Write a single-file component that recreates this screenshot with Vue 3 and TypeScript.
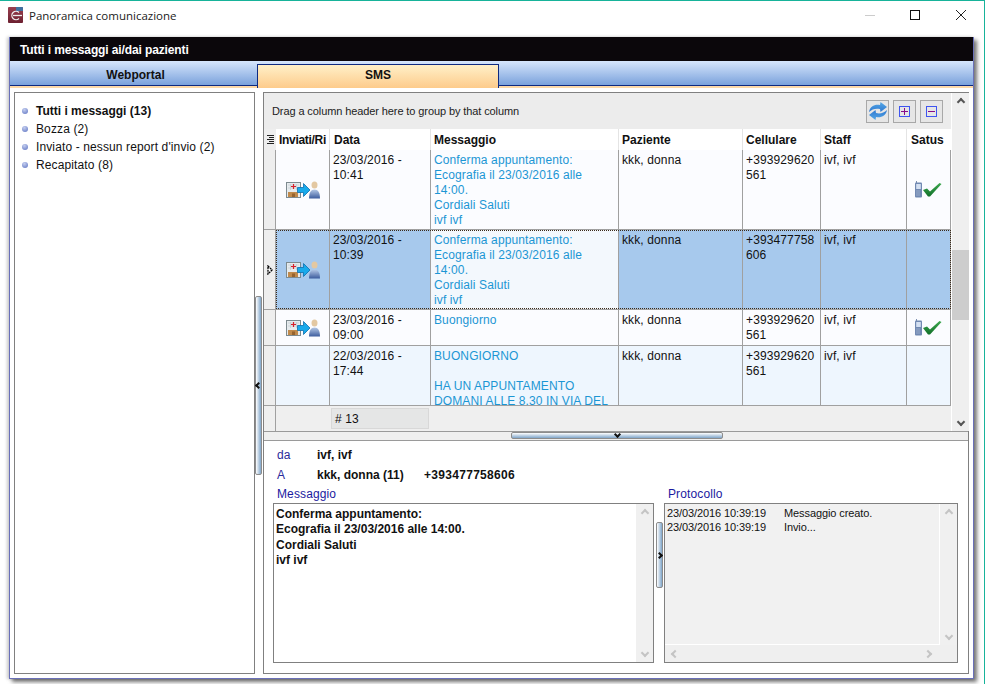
<script setup lang="ts">
interface Row {
  date: string
  time: string
  message: string[]
  phone: string[]
  sent: boolean
  delivered: boolean
  selected?: boolean
  alt?: boolean
  height: number
}

const folders = [
  { label: 'Tutti i messaggi (13)', bold: true },
  { label: 'Bozza (2)', bold: false },
  { label: "Inviato - nessun report d'invio (2)", bold: false },
  { label: 'Recapitato (8)', bold: false },
]

const columns = ['Inviati/Ri', 'Data', 'Messaggio', 'Paziente', 'Cellulare', 'Staff', 'Satus']

const confirm = ['Conferma appuntamento:', 'Ecografia il 23/03/2016 alle', '14:00.', 'Cordiali Saluti', 'ivf ivf']

const rows: Row[] = [
  { date: '23/03/2016 -', time: '10:41', message: confirm, phone: ['+393929620', '561'], sent: true, delivered: true, height: 79 },
  { date: '23/03/2016 -', time: '10:39', message: confirm, phone: ['+393477758', '606'], sent: true, delivered: false, selected: true, height: 79 },
  { date: '23/03/2016 -', time: '09:00', message: ['Buongiorno'], phone: ['+393929620', '561'], sent: true, delivered: true, height: 35 },
  { date: '22/03/2016 -', time: '17:44', message: ['BUONGIORNO', '\u00a0', 'HA UN APPUNTAMENTO', 'DOMANI ALLE 8.30 IN VIA DEL'], phone: ['+393929620', '561'], sent: false, delivered: false, alt: true, height: 59 },
]
</script>

<template>
  <div class="window">
    <div class="titlebar">
      <svg class="app-icon" width="15" height="16" viewBox="0 0 15 16">
        <defs>
          <linearGradient id="appbg" x1="0" y1="0" x2="0" y2="1">
            <stop offset="0" stop-color="#9a4050" />
            <stop offset="1" stop-color="#6c2030" />
          </linearGradient>
        </defs>
        <rect width="15" height="16" rx="1" fill="url(#appbg)" />
        <path d="M8 0h6a1 1 0 0 1 1 1v3H8z" fill="#3f6f9f" />
        <path d="M11 5.500A4.200 4.200 0 1 0 11 11.500" fill="none" stroke="#eee" stroke-width="1.300" />
        <path d="M5 8.500h9" stroke="#eee" stroke-width="1.300" />
      </svg>
      <span class="title">Panoramica comunicazione</span>
      <span class="spacer"></span>
      <span class="win-min"></span>
      <span class="win-max"></span>
      <svg class="win-close" width="10" height="10" viewBox="0 0 10 10">
        <path d="M0 0l10 10M10 0L0 10" stroke="#222" stroke-width="1" fill="none" />
      </svg>
    </div>

    <div class="frame">
      <div class="frame-head">Tutti i messaggi ai/dai pazienti</div>
      <div class="tabs">
        <div class="tab">Webportal</div>
        <div class="tab active">SMS</div>
      </div>

      <div class="main">
        <ul class="folders">
          <li v-for="f in folders" :key="f.label" :class="{ bold: f.bold }">
            <span class="dot"></span>{{ f.label }}
          </li>
        </ul>

        <div class="vsplit">
          <div class="vgrip"><span class="chev-l"></span></div>
        </div>

        <div class="right">
          <div class="upper">
            <div class="grid">
              <div class="groupbar">
                <span>Drag a column header here to group by that column</span>
                <div class="tools">
                  <button class="tool">
                    <svg width="20" height="20" viewBox="0 0 20 20">
                      <defs>
                        <linearGradient id="refresh" x1="0" y1="0" x2="0" y2="1">
                          <stop offset="0" stop-color="#55a8e6" />
                          <stop offset="1" stop-color="#2f78d0" />
                        </linearGradient>
                      </defs>
                      <path d="M1 11C2 5 7 3 12 4l.5-3L19 6l-6.500 5-.5-3C8 7 4 8 1 11z" fill="url(#refresh)" />
                      <path d="M1 11C2 5 7 3 12 4l.5-3L19 6l-6.500 5-.5-3C8 7 4 8 1 11z" fill="url(#refresh)" transform="rotate(180 10 10)" />
                    </svg>
                  </button>
                  <button class="tool"><span class="mini plus"></span></button>
                  <button class="tool"><span class="mini"></span></button>
                </div>
              </div>

              <div class="cols headrow">
                <div class="ind">
                  <svg width="7" height="9" viewBox="0 0 7 9"><path d="M0 .5h7M2 2.500h5M0 4.500h7M2 6.500h5M0 8.500h7" stroke="#222" stroke-width="1" /></svg>
                </div>
                <div v-for="c in columns" :key="c" class="hcell">{{ c }}</div>
              </div>

              <div class="body">
                <div
                  v-for="(r, i) in rows"
                  :key="i"
                  class="cols row"
                  :class="{ selected: r.selected, alt: r.alt }"
                  :style="{ height: r.height + 'px' }"
                >
                  <div class="ind">
                    <svg v-if="r.selected" width="6" height="10" viewBox="0 0 6 10">
                      <path d="M1 1l4 4-4 4z" fill="#fff" stroke="#000" stroke-width="1.300" stroke-dasharray="2 .7" />
                    </svg>
                  </div>
                  <div class="cell center">
                    <svg v-if="r.sent" width="34" height="18" viewBox="0 0 34 18">
                      <defs>
                        <linearGradient id="person" x1="0" y1="0" x2="0" y2="1">
                          <stop offset="0" stop-color="#b4c8e6" />
                          <stop offset="1" stop-color="#3c5c9e" />
                        </linearGradient>
                      </defs>
                      <rect x=".5" y="1.500" width="14" height="15" fill="#e6ebee" stroke="#7d8a8f" />
                      <path d="M2 4h11M2 7h11M4.500 3v6M10.500 3v6" stroke="#c0cad0" stroke-width=".7" />
                      <path d="M7.500 3v5M5 5.500h5" stroke="#d8202a" stroke-width="1.200" />
                      <rect x="2" y="11" width="10" height="5" fill="#c08a4c" />
                      <rect x="6" y="12.500" width="3" height="3.500" fill="#96632e" />
                      <path d="M11.500 6.500h6V2.500l6.500 6.500-6.500 6.500v-4h-6z" fill="#18a9ea" stroke="#0b6fae" stroke-width=".8" />
                      <ellipse cx="28.500" cy="4" rx="3" ry="3.500" fill="#e3c8a2" />
                      <path d="M23 17.500c0-6 2-9 5.500-9s5.500 3 5.500 9z" fill="url(#person)" />
                    </svg>
                  </div>
                  <div class="cell">{{ r.date }}<br />{{ r.time }}</div>
                  <div class="cell msg"><div v-for="(m, j) in r.message" :key="j">{{ m }}</div></div>
                  <div class="cell">kkk, donna</div>
                  <div class="cell">{{ r.phone[0] }}<br />{{ r.phone[1] }}</div>
                  <div class="cell">ivf, ivf</div>
                  <div class="cell center">
                    <svg v-if="r.delivered" class="status" width="27" height="17" viewBox="0 0 27 17">
                      <defs>
                        <linearGradient id="tick" x1="0" y1="0" x2="0" y2="1">
                          <stop offset="0" stop-color="#3ca84e" />
                          <stop offset="1" stop-color="#12702a" />
                        </linearGradient>
                      </defs>
                      <path d="M1.500 0v2" stroke="#7d8fb0" />
                      <rect x="0" y="1.500" width="7" height="15" rx="1" fill="#7189b2" />
                      <rect x="1.200" y="3" width="4.600" height="5" fill="#d4e0f2" />
                      <path d="M1.500 10h4M1.500 12h4M1.500 14h4" stroke="#c0cde2" stroke-dasharray="1 1" />
                      <path d="M8 9l4-1.500 3 3L24.500 2 26.500 3 15 15.500h-2z" fill="url(#tick)" />
                    </svg>
                  </div>
                </div>
              </div>

              <div class="cols footrow">
                <div class="ind"></div>
                <div class="fcell"></div>
                <div class="fcell"><span class="count"># 13</span></div>
              </div>
            </div>

            <div class="scroll">
              <span class="arrow up"></span>
              <span class="thumb"></span>
              <span class="arrow down"></span>
            </div>
          </div>

          <div class="hsplit"><div class="hgrip"><span class="chev-d"></span></div></div>

          <div class="detail">
            <div class="addr">
              <span class="addr-key">da</span><b>ivf, ivf</b>
            </div>
            <div class="addr">
              <span class="addr-key">A</span><b class="addr-name">kkk, donna (11)</b><b class="addr-phone">+393477758606</b>
            </div>
            <div class="panes">
              <div class="pane left-pane">
                <div class="pane-label">Messaggio</div>
                <div class="box white">
                  <div class="box-text bold-text">
                    Conferma appuntamento:<br />Ecografia il 23/03/2016 alle 14:00.<br />Cordiali Saluti<br />ivf ivf
                  </div>
                  <div class="box-scroll">
                    <span class="arrow up soft"></span>
                    <span class="arrow down soft"></span>
                  </div>
                </div>
              </div>

              <div class="psplit"><div class="pgrip"><span class="chev-r"></span></div></div>

              <div class="pane right-pane">
                <div class="pane-label">Protocollo</div>
                <div class="box grey">
                  <div class="proto-wrap">
                    <div class="proto">
                      <div class="proto-line"><span>23/03/2016 10:39:19</span><span>Messaggio creato.</span></div>
                      <div class="proto-line"><span>23/03/2016 10:39:19</span><span>Invio...</span></div>
                    </div>
                    <div class="box-scroll">
                      <span class="arrow up soft"></span>
                      <span class="arrow down soft"></span>
                    </div>
                  </div>
                  <div class="h-scroll">
                    <span class="arrow lft soft"></span>
                    <span class="arrow rgt soft"></span>
                  </div>
                </div>
              </div>
            </div>
          </div>
        </div>
      </div>
    </div>
  </div>
</template>

<style>
html, body { margin: 0; background: #fff; overflow: hidden; }
</style>

<style scoped>
.window {
  width: 985px;
  height: 684px;
  box-sizing: border-box;
  border-top: 1px solid #17b39a;
  border-right: 1px solid #17b39a;
  background: #fff;
  font-family: "Liberation Sans", Arial, sans-serif;
  font-size: 12px;
  letter-spacing: 0.12px;
  color: #111;
  overflow: hidden;
}
.titlebar {
  height: 36px;
  display: flex;
  align-items: center;
  padding: 0 18px 8px 8px;
  box-sizing: border-box;
}
.title { margin-left: 6px; font-family: "Open Sans", "Noto Sans", sans-serif; font-size: 11.5px; letter-spacing: 0; color: #222; }
.spacer { flex: 1; }
.win-min { width: 10px; height: 1px; background: #ccc; margin-right: 35px; }
.win-max { width: 8px; height: 8px; border: 1px solid #111; margin-right: 36px; }
.frame {
  margin-left: 9px;
  width: 965px;
  height: 642px;
  box-sizing: border-box;
  border: 1px solid #6a70b8;
  border-top: 0;
  background: #fff;
  box-shadow: 3px 3px 4px rgba(0, 0, 0, 0.55), -2px 0 3px rgba(0, 0, 0, 0.2);
  display: flex;
  flex-direction: column;
}
.frame-head {
  height: 24px;
  line-height: 27px;
  background: #0b070b;
  color: #fff;
  font-weight: bold;
  letter-spacing: -0.12px;
  padding-left: 10px;
  flex: none;
}
.tabs {
  height: 25px;
  display: flex;
  box-sizing: border-box;
  border-bottom: 1px solid #0e2a80;
  box-shadow: 0 2px 0 #fdd9a8;
  background: linear-gradient(#d6e6fc, #7ba2dc);
  flex: none;
}
.tab {
  width: 247px;
  text-align: center;
  font-weight: bold;
  letter-spacing: 0;
  line-height: 28px;
  padding-left: 4px;
  box-sizing: border-box;
  color: #111;
}
.tab.active {
  width: 242px;
  box-sizing: border-box;
  border: 1px solid #0e2a80;
  border-bottom: 0;
  margin-top: 3px;
  height: 24px;
  padding-left: 0;
  background: linear-gradient(#fff0c8, #fdcb8b);
  position: relative;
  line-height: 21px;
}
.main {
  flex: 1;
  min-height: 0;
  display: flex;
  padding: 6px 4px 4px 4px;
}
.folders {
  width: 241px;
  box-sizing: border-box;
  border: 1px solid #808080;
  list-style: none;
  margin: 0;
  padding: 9px 0 0 7px;
}
.folders li { height: 18px; line-height: 18px; display: flex; align-items: center; }
.folders li.bold { font-weight: bold; letter-spacing: 0; }
.dot {
  width: 6px;
  height: 6px;
  border-radius: 50%;
  background: radial-gradient(circle at 40% 30%, #c5cff0, #5a70c0);
  margin-right: 8px;
}
.vsplit { width: 8px; display: flex; align-items: center; }
.vgrip {
  width: 7px;
  height: 179px;
  margin-top: 4px;
  box-sizing: border-box;
  border: 1px solid #8c8c8c;
  border-radius: 2px;
  background: linear-gradient(90deg, #fff, #7fa5c9);
  display: flex;
  align-items: center;
  justify-content: center;
}
.right {
  width: 706px;
  box-sizing: border-box;
  border: 1px solid #808080;
  display: flex;
  flex-direction: column;
}
.upper { height: 338px; display: flex; border-bottom: 1px solid #9a9a9a; box-sizing: content-box; flex: none; }
.grid { width: 687px; display: flex; flex-direction: column; }
.groupbar {
  height: 36px;
  background: #ececec;
  display: flex;
  align-items: center;
  justify-content: space-between;
  padding: 0 8px 0 8px;
  font-size: 11px;
  letter-spacing: -0.1px;
  color: #222;
  flex: none;
}
.tools { display: flex; gap: 4px; }
.tool {
  width: 23px;
  height: 23px;
  padding: 0;
  box-sizing: border-box;
  border: 1px solid #a8a8a8;
  background: #e6e6e6;
  display: flex;
  align-items: center;
  justify-content: center;
}
.mini { width: 9px; height: 9px; border: 1px solid #3f55f0; position: relative; box-sizing: content-box; }
.mini::before { content: ""; position: absolute; left: 1px; right: 1px; top: 4px; height: 1px; background: #8a0a8a; }
.mini.plus::after { content: ""; position: absolute; top: 1px; bottom: 1px; left: 4px; width: 1px; background: #8a0a8a; }
.cols {
  display: grid;
  grid-template-columns: 12px 54px 101px 188px 124px 78px 86px 44px;
}
.headrow { height: 21px; background: #fff; flex: none; }
.headrow .ind { background: #eee; display: flex; align-items: center; justify-content: center; }
.hcell {
  font-weight: bold;
  letter-spacing: 0;
  line-height: 23px;
  padding-left: 3px;
  white-space: nowrap;
  overflow: hidden;
  border-right: 1px solid #e4e4e4;
}
.hcell:nth-child(2) { letter-spacing: -0.3px; }
.hcell:nth-child(3) { padding-left: 4px; }
.hcell:last-child { padding-left: 4px; border-right: 0; }
.body { flex: 1; min-height: 0; overflow: hidden; }
.row { box-sizing: content-box; border-bottom: 1px solid #a0a0a0; background: #fbfcff; overflow: hidden; position: relative; }
.row .ind { background: #eee; border-right: 1px solid #a0a0a0; box-sizing: border-box; display: flex; align-items: center; justify-content: center; }
.cell {
  border-right: 1px solid #a0a0a0;
  padding: 3px 3px 0;
  line-height: 15px;
  overflow: hidden;
  white-space: nowrap;
}
.cell.center { display: flex; align-items: center; justify-content: center; padding: 0; }
.msg { color: #1c96d4; }
.row.alt { background: #eef6fe; }
.row.selected { background: #a7c9ed; }
.row.selected::after {
  content: "";
  position: absolute;
  inset: 0 0 0 12px;
  border: 1px dotted #3a2a1a;
  pointer-events: none;
}
.row.selected .msg { background: #f3f8fd; }
.status { margin-left: -1px; }
.footrow { height: 25px; background: #efefef; flex: none; }
.footrow .ind { border-right: 1px solid #a0a0a0; }
.fcell { border-right: 1px solid transparent; display: flex; align-items: center; padding: 0 1px; }
.count {
  width: 100%;
  height: 21px;
  line-height: 21px;
  box-sizing: border-box;
  background: #e5e6e6;
  border: 1px solid #d8d8d8;
  padding-left: 3px;
}
.scroll {
  width: 17px;
  background: #efefef;
  border-left: 1px solid #fff;
  display: flex;
  flex-direction: column;
  align-items: center;
  position: relative;
}
.thumb {
  display: block;
  width: 17px;
  height: 70px;
  background: #cdcdcd;
  margin-top: 145px;
}
.arrow { display: block; width: 6px; height: 6px; border: solid #555; border-width: 2px 0 0 2px; box-sizing: border-box; }
.arrow.soft { border-color: #c4c4c4; }
.arrow.up { transform: rotate(45deg); margin-top: 6px; }
.arrow.down { transform: rotate(225deg); margin-top: auto; margin-bottom: 6px; }
.arrow.lft { transform: rotate(-45deg); }
.arrow.rgt { transform: rotate(135deg); }
.hsplit { height: 8px; box-sizing: content-box; background: #efefef; border-bottom: 1px solid #9a9a9a; flex: none; display: flex; justify-content: flex-start; }
.hgrip {
  width: 212px;
  height: 7px;
  margin-left: 247px;
  box-sizing: border-box;
  border: 1px solid #8c8c8c;
  border-radius: 2px;
  background: linear-gradient(#fff, #7fa5c9);
  display: flex;
  justify-content: center;
}
.chev-d { width: 5px; height: 5px; border: solid #111; border-width: 0 2px 2px 0; transform: rotate(45deg); margin-top: -1px; box-sizing: border-box; }
.chev-l { width: 5px; height: 5px; border: solid #111; border-width: 0 0 2px 2px; transform: rotate(45deg); box-sizing: border-box; flex: none; }
.chev-r { width: 5px; height: 5px; border: solid #111; border-width: 2px 2px 0 0; transform: rotate(45deg); box-sizing: border-box; flex: none; }
.detail { flex: 1; min-height: 0; display: flex; flex-direction: column; padding: 4px 9px 10px 9px; }
.addr { height: 20px; line-height: 20px; display: flex; padding-left: 4px; flex: none; }
.addr b { letter-spacing: 0; }
.addr-key { width: 40px; color: #2a2a9a; }
.addr-name { width: 107px; }
.addr b.addr-phone { letter-spacing: 0.3px; }
.panes { flex: 1; min-height: 0; display: flex; }
.pane { display: flex; flex-direction: column; }
.left-pane { width: 381px; }
.right-pane { width: 294px; }
.pane-label { height: 18px; line-height: 18px; color: #1a1aa0; padding-left: 4px; flex: none; }
.box { flex: 1; min-height: 0; border: 1px solid #808080; box-sizing: border-box; display: flex; }
.box.grey { flex-direction: column; background: #f1f1f1; font-size: 11px; letter-spacing: -0.1px; }
.box-text { flex: 1; padding: 3px 2px; line-height: 15.300px; }
.bold-text { font-weight: bold; letter-spacing: 0; }
.box-scroll {
  width: 17px;
  flex: none;
  background: #f0f0f0;
  display: flex;
  flex-direction: column;
  align-items: center;
}
.psplit { width: 10px; flex: none; display: flex; padding-top: 37px; justify-content: center; box-sizing: border-box; }
.pgrip {
  width: 7px;
  height: 66px;
  box-sizing: border-box;
  border: 1px solid #8c8c8c;
  border-radius: 2px;
  background: linear-gradient(90deg, #fff, #7fa5c9);
  display: flex;
  align-items: center;
  justify-content: center;
}
.proto-wrap { flex: 1; min-height: 0; display: flex; }
.proto { flex: 1; padding: 2px 2px; border-bottom: 1px solid #fff; border-right: 1px solid #fff; }
.proto-line { display: flex; height: 14px; line-height: 14px; }
.proto-line span:first-child { width: 117px; }
.h-scroll { height: 17px; flex: none; display: flex; justify-content: space-between; align-items: center; padding: 0 26px 0 7px; background: #efefef; }
</style>
